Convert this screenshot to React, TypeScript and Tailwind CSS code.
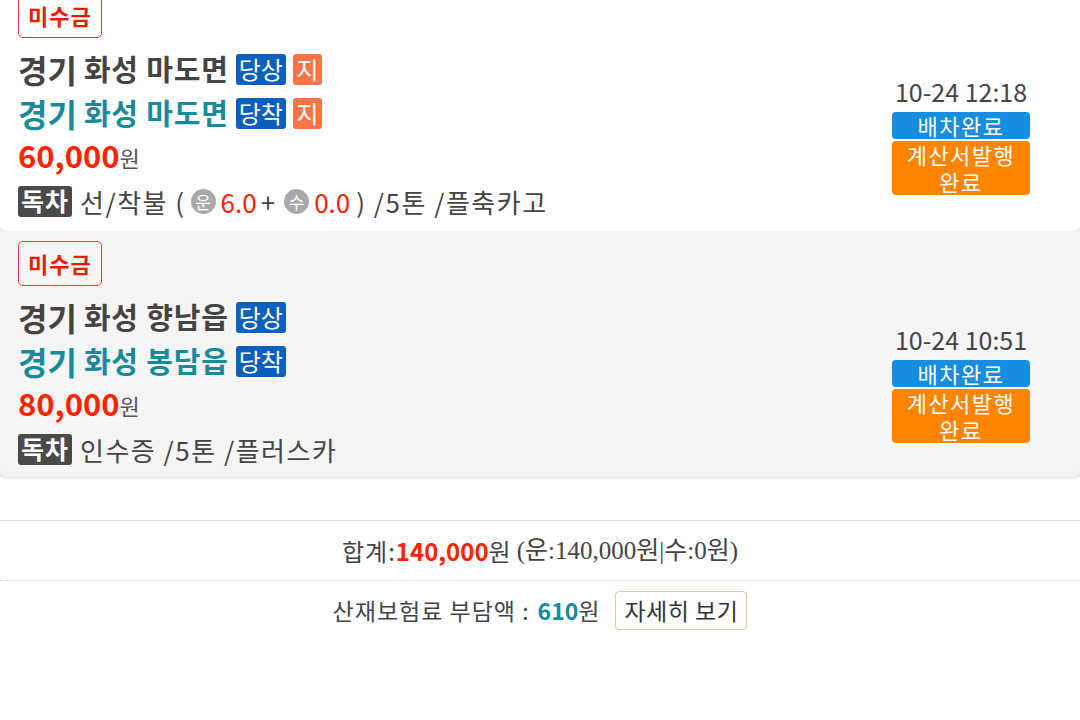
import React from "react";

type Order = {
  from: string;
  fromCity: string;
  to: string;
  toCity: string;
  ji: boolean;
  price: string;
  date: string;
  bg: string;
  pb: string;
  detail: React.ReactNode;
};

const Circle = ({ ch }: { ch: string }) => (
  <span className="inline-flex items-center justify-center w-[25px] h-[25px] rounded-full bg-[#a9a9a9] text-white text-[17px] leading-none mx-[5px] tracking-normal">
    {ch}
  </span>
);

const orders: Order[] = [
  {
    from: "경기",
    fromCity: "화성 마도면",
    to: "경기",
    toCity: "화성 마도면",
    ji: true,
    price: "60,000",
    date: "10-24 12:18",
    bg: "bg-white",
    pb: "pb-[8px]",
    detail: (
      <>
        <span className="tracking-[1.5px]">선/착불 (</span>
        <Circle ch="운" />
        <span className="text-[#ff2200]">6.0</span>
        <span className="mx-[4px]">+</span>
        <Circle ch="수" />
        <span className="text-[#ff2200]">0.0</span>
        <span className="ml-[6px] tracking-[1.5px]">) /5톤 /플축카고</span>
      </>
    ),
  },
  {
    from: "경기",
    fromCity: "화성 향남읍",
    to: "경기",
    toCity: "화성 봉담읍",
    ji: false,
    price: "80,000",
    date: "10-24 10:51",
    bg: "bg-[#f5f5f5]",
    pb: "pb-[6px]",
    detail: <span className="tracking-[1.5px]">인수증 /5톤 /플러스카</span>,
  },
];

function Card({ o }: { o: Order }) {
  return (
    <div className={`${o.bg} ${o.pb} rounded-b-[6px] shadow-[0_1px_2px_rgba(0,0,0,0.12)] pl-[18px] pr-[50px] pt-[10px]`}>
      <div className="inline-flex items-center h-[45px] px-[9px] border border-[#f33] rounded-[5px] text-[#ee1a00] text-[22px] font-bold tracking-[1px]">
        미수금
      </div>
      <div className="flex items-center mt-[9px]">
        <div className="flex-1">
          <div className="flex items-center h-[44px] text-[#444]">
            <span className="text-[32px] font-bold mr-[7px]">{o.from}</span>
            <span className="text-[29px] font-bold tracking-[0.8px]">{o.fromCity}</span>
            <span className="ml-[7px] h-[31px] px-[3px] flex items-center rounded-[3px] bg-[#0b5fbe] text-white text-[24px]">당상</span>
            {o.ji && (
              <span className="ml-[7px] h-[31px] w-[29px] flex items-center justify-center rounded-[3px] bg-[#fb7446] text-white text-[24px]">지</span>
            )}
          </div>
          <div className="flex items-center h-[44px] text-[#178b9a]">
            <span className="text-[32px] font-bold mr-[7px]">{o.to}</span>
            <span className="text-[29px] font-bold tracking-[0.8px]">{o.toCity}</span>
            <span className="ml-[7px] h-[31px] px-[3px] flex items-center rounded-[3px] bg-[#0b5fbe] text-white text-[24px]">당착</span>
            {o.ji && (
              <span className="ml-[7px] h-[31px] w-[29px] flex items-center justify-center rounded-[3px] bg-[#fb7446] text-white text-[24px]">지</span>
            )}
          </div>
          <div className="flex items-center h-[44px] pb-[3px]">
            <span className="text-[31px] font-bold text-[#ff2200]">{o.price}</span>
            <span className="text-[22px] text-[#555] mt-[4px]">원</span>
          </div>
          <div className="flex items-center h-[44px] text-[26px] text-[#444]">
            <span className="h-[31px] px-[3px] mr-[8px] flex items-center rounded-[3px] bg-[#4a4a4a] text-white text-[25px] font-bold tracking-[1px]">독차</span>
            {o.detail}
          </div>
        </div>
        <div className="w-[138px] flex flex-col items-center">
          <div className="text-[25px] text-[#444] leading-[30px] mb-[6px]">{o.date}</div>
          <div className="w-full h-[27px] rounded-[4px] bg-[#178de0] text-white text-[22px] leading-[27px] text-center tracking-[1.5px]">배차완료</div>
          <div className="w-full mt-[2px] h-[54px] flex flex-col rounded-[4px] bg-[#ff8500] text-white text-[22px] leading-[27px] text-center tracking-[1.5px]">
            <span>계산서발행</span>
            <span>완료</span>
          </div>
        </div>
      </div>
    </div>
  );
}

export default function App() {
  return (
    <div className="min-h-screen bg-white overflow-hidden font-['Noto_Sans_CJK_KR','Noto_Sans',sans-serif]">
      <div className="-mt-[17px] bg-[#f5f5f5]">
        {orders.map((o) => (
          <Card key={o.date} o={o} />
        ))}
      </div>

      <div className="mt-[43px] border-t border-[#d9d9d9]">
        <div className="h-[59px] flex items-center justify-center text-[24px] text-[#444]">
          <span className="tracking-[1px]">합계:</span>
          <span className="font-bold text-[#ff2200]">140,000</span>
          <span>원</span>
          <span className="ml-[6px] text-[25px] font-['Liberation_Serif','Noto_Sans_CJK_KR',serif]">(운:140,000원|수:0원)</span>
        </div>
        <div className="border-t border-dotted border-[#cfcfcf] h-[59px] flex items-center justify-center text-[23px] text-[#444]">
          <span className="tracking-[1px]">산재보험료 부담액 :</span>
          <span className="ml-[8px] font-bold text-[#178b9a]">610</span>
          <span>원</span>
          <button type="button" className="ml-[16px] h-[39px] px-[8px] border border-[#dccb92] rounded-[4px] text-[23px] text-[#333] bg-white tracking-[0.5px]">
            자세히 보기
          </button>
        </div>
      </div>
    </div>
  );
}
